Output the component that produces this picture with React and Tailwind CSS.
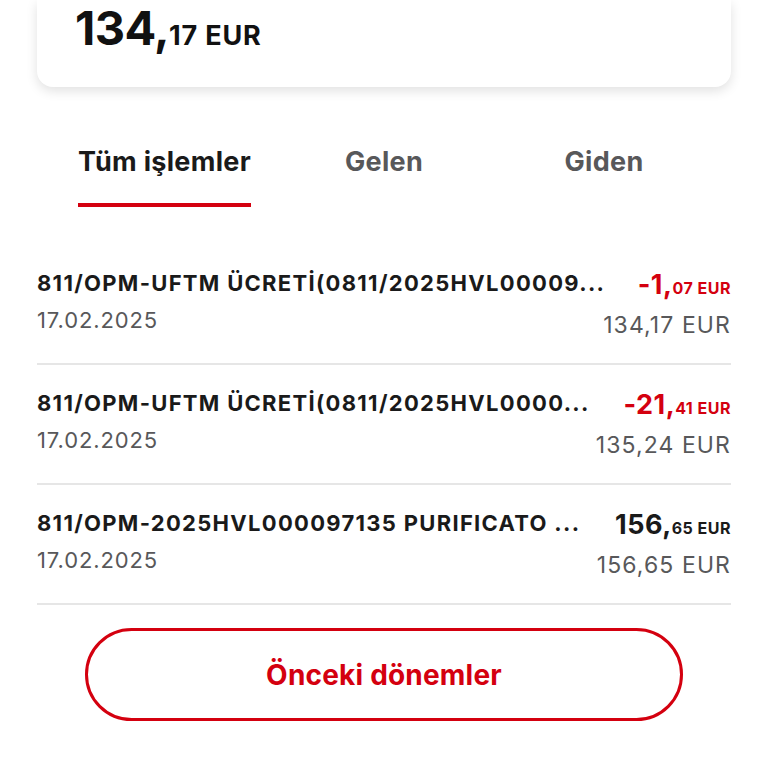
export default function App() {
  const rows = [
    { title: "811/OPM-UFTM ÜCRETİ(0811/2025HVL00009...", date: "17.02.2025", main: "-1,", dec: "07 EUR", neg: true, bal: "134,17 EUR" },
    { title: "811/OPM-UFTM ÜCRETİ(0811/2025HVL0000...", date: "17.02.2025", main: "-21,", dec: "41 EUR", neg: true, bal: "135,24 EUR" },
    { title: "811/OPM-2025HVL000097135 PURIFICATO ...", date: "17.02.2025", main: "156,", dec: "65 EUR", neg: false, bal: "156,65 EUR" },
  ];
  return (
    <div className="w-[768px] h-[768px] overflow-hidden bg-white font-['Inter',sans-serif]">
      <div className="mx-[37px] h-[87px] rounded-b-[16px] bg-white shadow-[0_4px_12px_rgba(0,0,0,0.12)] pl-[38px]">
        <div className="flex items-baseline text-[#111] leading-[56px] whitespace-nowrap">
          <span className="text-[47px] font-bold tracking-[-0.6px]">134,</span>
          <span className="text-[27px] font-bold tracking-[0.8px]">17 EUR</span>
        </div>
      </div>

      <div className="mt-[53px] px-[54px] grid grid-cols-3">
        <div className="pl-[24px]">
          <div className="inline-flex flex-col">
            <span className="text-[27px] font-bold text-[#1a1a1a] leading-[44px] tracking-[0.3px] whitespace-nowrap">Tüm işlemler</span>
            <div className="mt-[19px] h-[4px] w-full bg-[#d4000f]" />
          </div>
        </div>
        <div className="flex justify-center">
          <span className="text-[27px] font-bold text-[#58585a] leading-[44px] tracking-[0.3px]">Gelen</span>
        </div>
        <div className="flex justify-center">
          <span className="text-[27px] font-bold text-[#58585a] leading-[44px] tracking-[0.3px]">Giden</span>
        </div>
      </div>

      <div className="mt-[38px] mx-[37px]">
        {rows.map((r, i) => (
          <div key={i} className="h-[120px] border-b-2 border-[#e6e6e6] flex justify-between pt-[22px]">
            <div className="flex flex-col min-w-0">
              <span className="text-[22px] font-bold text-[#1a1a1a] whitespace-nowrap leading-[32px] tracking-[1.3px]">{r.title}</span>
              <span className="text-[22px] text-[#58585a] leading-[32px] mt-[5px] tracking-[0.9px] whitespace-nowrap">{r.date}</span>
            </div>
            <div className="flex flex-col items-end shrink-0 whitespace-nowrap">
              <div className={"flex items-baseline leading-[32px] mt-[2px] " + (r.neg ? "text-[#d4000f]" : "text-[#1a1a1a]")}>
                <span className="text-[27px] font-bold tracking-[0.5px]">{r.main}</span>
                <span className="text-[16px] font-bold tracking-[0.5px]">{r.dec}</span>
              </div>
              <span className="text-[23px] text-[#58585a] leading-[32px] mt-[5px] tracking-[1.1px]">{r.bal}</span>
            </div>
          </div>
        ))}
      </div>

      <div className="mt-[23px] mx-[85px]">
        <button className="w-full h-[93px] rounded-full border-[3px] border-[#d4000f] text-[#d4000f] text-[28px] font-bold flex items-center justify-center tracking-[0.2px]">
          Önceki dönemler
        </button>
      </div>
    </div>
  );
}
